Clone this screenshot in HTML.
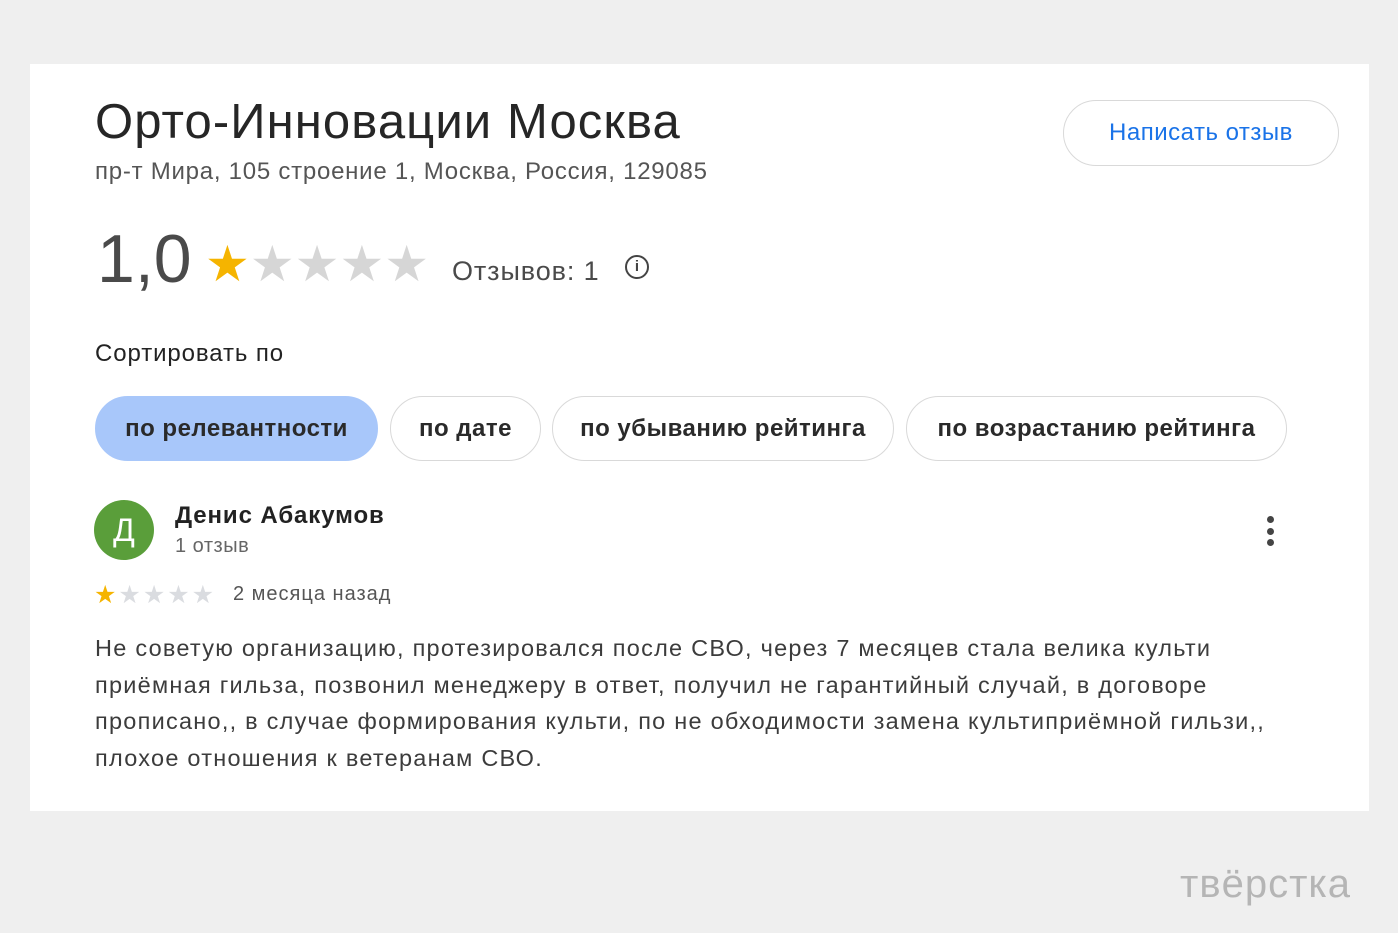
<!DOCTYPE html>
<html><head><meta charset="utf-8"><style>
*{margin:0;padding:0;box-sizing:border-box}
body{width:1398px;height:933px;background:#efefef;font-family:"Liberation Sans",Arial,sans-serif;position:relative;overflow:hidden}
.card{position:absolute;left:30px;top:64px;width:1339px;height:747px;background:#fff}
.a{position:absolute;white-space:nowrap}
.chip{position:absolute;top:396px;height:65px;border:1px solid #d9d9d9;border-radius:33px;font-size:24px;font-weight:bold;color:#2a2a2a;display:flex;align-items:center;justify-content:center;letter-spacing:0.5px}
.star{font-size:50px;color:#d6d6d6}
</style></head><body>
<div class="card"></div>
<div class="a" style="left:95px;top:94px;font-size:49px;color:#262626;letter-spacing:1.1px">Орто-Инновации Москва</div>
<div class="a" style="left:95px;top:158px;font-size:24px;color:#555;letter-spacing:0.75px">пр-т Мира, 105 строение 1, Москва, Россия, 129085</div>
<div class="a" style="left:1063px;top:100px;width:276px;height:66px;border:1px solid #d9d9d9;border-radius:33px;color:#1a73e8;font-size:24px;display:flex;align-items:center;justify-content:center;letter-spacing:0.5px">Написать отзыв</div>
<div class="a" style="left:97px;top:220px;font-size:68px;color:#4a4a4a">1,0</div>
<div class="a" style="left:205px;top:234px;font-size:50px;line-height:60px;letter-spacing:0px"><span style="color:#f5b400">★</span><span class="star">★★★★</span></div>
<div class="a" style="left:452px;top:256px;font-size:27px;color:#4a4a4a;letter-spacing:0.9px">Отзывов: 1</div>
<div class="a" style="left:625px;top:255px;width:24px;height:24px;border:2px solid #444;border-radius:50%;font-size:15px;font-weight:bold;color:#444;text-align:center;line-height:20px">i</div>
<div class="a" style="left:95px;top:340px;font-size:24px;color:#222;letter-spacing:0.9px">Сортировать по</div>
<div class="chip" style="left:95px;width:283px;background:#a8c7fa;border-color:#a8c7fa">по релевантности</div>
<div class="chip" style="left:390px;width:151px">по дате</div>
<div class="chip" style="left:552px;width:342px">по убыванию рейтинга</div>
<div class="chip" style="left:906px;width:381px">по возрастанию рейтинга</div>
<div class="a" style="left:94px;top:500px;width:60px;height:60px;border-radius:50%;background:#5a9e3a;color:#fff;font-size:32px;text-align:center;line-height:60px">Д</div>
<div class="a" style="left:175px;top:502px;font-size:24px;font-weight:bold;color:#222;letter-spacing:0.9px">Денис Абакумов</div>
<div class="a" style="left:175px;top:535px;font-size:20px;color:#666;letter-spacing:0.5px">1 отзыв</div>
<div class="a" style="left:1267px;top:516px;width:7px;height:30px;display:flex;flex-direction:column;justify-content:space-between"><i style="width:7px;height:7px;border-radius:50%;background:#444"></i><i style="width:7px;height:7px;border-radius:50%;background:#444"></i><i style="width:7px;height:7px;border-radius:50%;background:#444"></i></div>
<div class="a" style="left:94px;top:580px;font-size:25px;line-height:30px;letter-spacing:2px"><span style="color:#f5b400">★</span><span style="color:#dadce0">★★★★</span></div>
<div class="a" style="left:233px;top:583px;font-size:20px;color:#555;letter-spacing:1px">2 месяца назад</div>
<div class="a" style="left:95px;top:630px;font-size:23.5px;line-height:36.6px;color:#3c3c3c;letter-spacing:1.25px">Не советую организацию, протезировался после СВО, через 7 месяцев стала велика культи<br>приёмная гильза, позвонил менеджеру в ответ, получил не гарантийный случай, в договоре<br>прописано,, в случае формирования культи, по не обходимости замена культиприёмной гильзи,,<br>плохое отношения к ветеранам СВО.</div>
<div class="a" style="left:1180px;top:862px;font-size:40px;color:#b5b5b5;letter-spacing:1px">твёрстка</div>
</body></html>
